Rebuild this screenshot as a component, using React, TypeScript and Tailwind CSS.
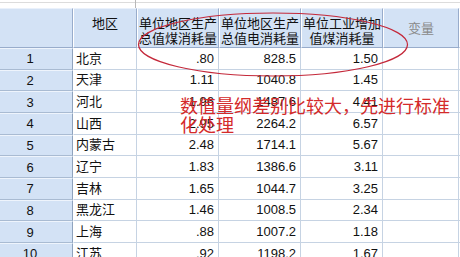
import React from "react";

const rows: [string, string, string, string, string][] = [
  ["1", "北京", ".80", "828.5", "1.50"],
  ["2", "天津", "1.11", "1040.8", "1.45"],
  ["3", "河北", "1.96", "1487.6", "4.41"],
  ["4", "山西", "2.95", "2264.2", "6.57"],
  ["5", "内蒙古", "2.48", "1714.1", "5.67"],
  ["6", "辽宁", "1.83", "1386.6", "3.11"],
  ["7", "吉林", "1.65", "1044.7", "3.25"],
  ["8", "黑龙江", "1.46", "1008.5", "2.34"],
  ["9", "上海", ".88", "1007.2", "1.18"],
  ["10", "江苏", ".92", "1198.2", "1.67"],
];

const cols = "grid grid-cols-[73px_64px_82px_82px_82px_76px_1fr]";
const font = { fontFamily: '"Liberation Sans", "Noto Sans CJK SC", sans-serif' };

export default function App() {
  return (
    <div
      className="relative w-[460px] h-[257px] overflow-hidden bg-white text-[13px] text-[#111]"
      style={font}
    >
      {/* top strip */}
      <div className="h-[8px] flex">
        <div className="w-[135px] h-[3px] border-b border-[#dcdcdc]" />
        <div className="w-[1px] h-[8px] bg-[#b8b8b8]" />
        <div className="flex-1 h-[3px] border-b border-[#dcdcdc]" />
      </div>

      {/* header */}
      <div className={`${cols} h-[40px]`}>
        <div className="bg-[#d3e2f5] border-t border-t-[#eaf1fb] border-r border-r-[#98accb] border-b border-b-[#98accb]" />
        <div className="bg-[#d3e2f5] border-t border-t-[#eaf1fb] border-l border-l-white border-r border-r-[#98accb] border-b border-b-[#98accb] flex justify-center pt-[7px] leading-[15px]">
          地区
        </div>
        <div className="bg-[#d3e2f5] border-t border-t-[#eaf1fb] border-l border-l-white border-r border-r-[#98accb] border-b border-b-[#98accb] flex flex-col items-center pt-[7px] leading-[15px] whitespace-nowrap">
          <span>单位地区生产</span>
          <span>总值煤消耗量</span>
        </div>
        <div className="bg-[#d3e2f5] border-t border-t-[#eaf1fb] border-l border-l-white border-r border-r-[#98accb] border-b border-b-[#98accb] flex flex-col items-center pt-[7px] leading-[15px] whitespace-nowrap">
          <span>单位地区生产</span>
          <span>总值电消耗量</span>
        </div>
        <div className="bg-[#d3e2f5] border-t border-t-[#eaf1fb] border-l border-l-white border-r border-r-[#98accb] border-b border-b-[#98accb] flex flex-col items-center pt-[7px] leading-[15px] whitespace-nowrap">
          <span>单位工业增加</span>
          <span>值煤消耗量</span>
        </div>
        <div className="bg-[#d3e2f5] border-t border-t-[#eaf1fb] border-l border-l-white border-r border-r-[#98accb] border-b border-b-[#98accb] flex items-center justify-center text-[#8a8a8a] leading-[15px]">
          变量
        </div>
        <div className="bg-[#d3e2f5] border-t border-t-[#eaf1fb] border-l border-l-white border-b border-b-[#98accb]" />
      </div>

      {/* body rows */}
      {rows.map((r) => (
        <div key={r[0]} className={`${cols} h-[21.67px]`}>
          <div className="bg-[#d3e2f5] border-t border-t-[#eef4fc] border-r border-r-[#8fa3be] border-b border-b-[#a9bbd2] flex items-center justify-center pr-[12px] leading-none">
            {r[0]}
          </div>
          <div className="border-l border-l-white border-r border-r-[#c6d3e3] border-b border-b-[#c6d3e3] flex items-center pl-[2px] leading-none whitespace-nowrap">
            {r[1]}
          </div>
          <div className="border-r border-r-[#c6d3e3] border-b border-b-[#c6d3e3] flex items-center justify-end pr-[4px] leading-none">
            {r[2]}
          </div>
          <div className="border-r border-r-[#c6d3e3] border-b border-b-[#c6d3e3] flex items-center justify-end pr-[4px] leading-none">
            {r[3]}
          </div>
          <div className="border-r border-r-[#c6d3e3] border-b border-b-[#c6d3e3] flex items-center justify-end pr-[4px] leading-none">
            {r[4]}
          </div>
          <div className="border-r border-r-[#c6d3e3] border-b border-b-[#c6d3e3]" />
          <div className="border-b border-b-[#c6d3e3]" />
        </div>
      ))}

      {/* red ellipse annotation */}
      <svg
        className="absolute left-0 top-0 pointer-events-none"
        width="460"
        height="257"
        viewBox="0 0 460 257"
      >
        <ellipse
          cx="273"
          cy="44.5"
          rx="134.5"
          ry="31.5"
          fill="none"
          stroke="#c4283a"
          strokeWidth="1.2"
        />
      </svg>

      {/* red note */}
      <div
        className="absolute left-[180px] top-[96px] w-[272px] text-[18px] leading-[19px] text-[#d42a2a]"
        style={{ fontFamily: '"Noto Sans CJK SC", sans-serif' }}
      >
        数值量纲差别比较大，先进行标准化处理
      </div>
    </div>
  );
}
